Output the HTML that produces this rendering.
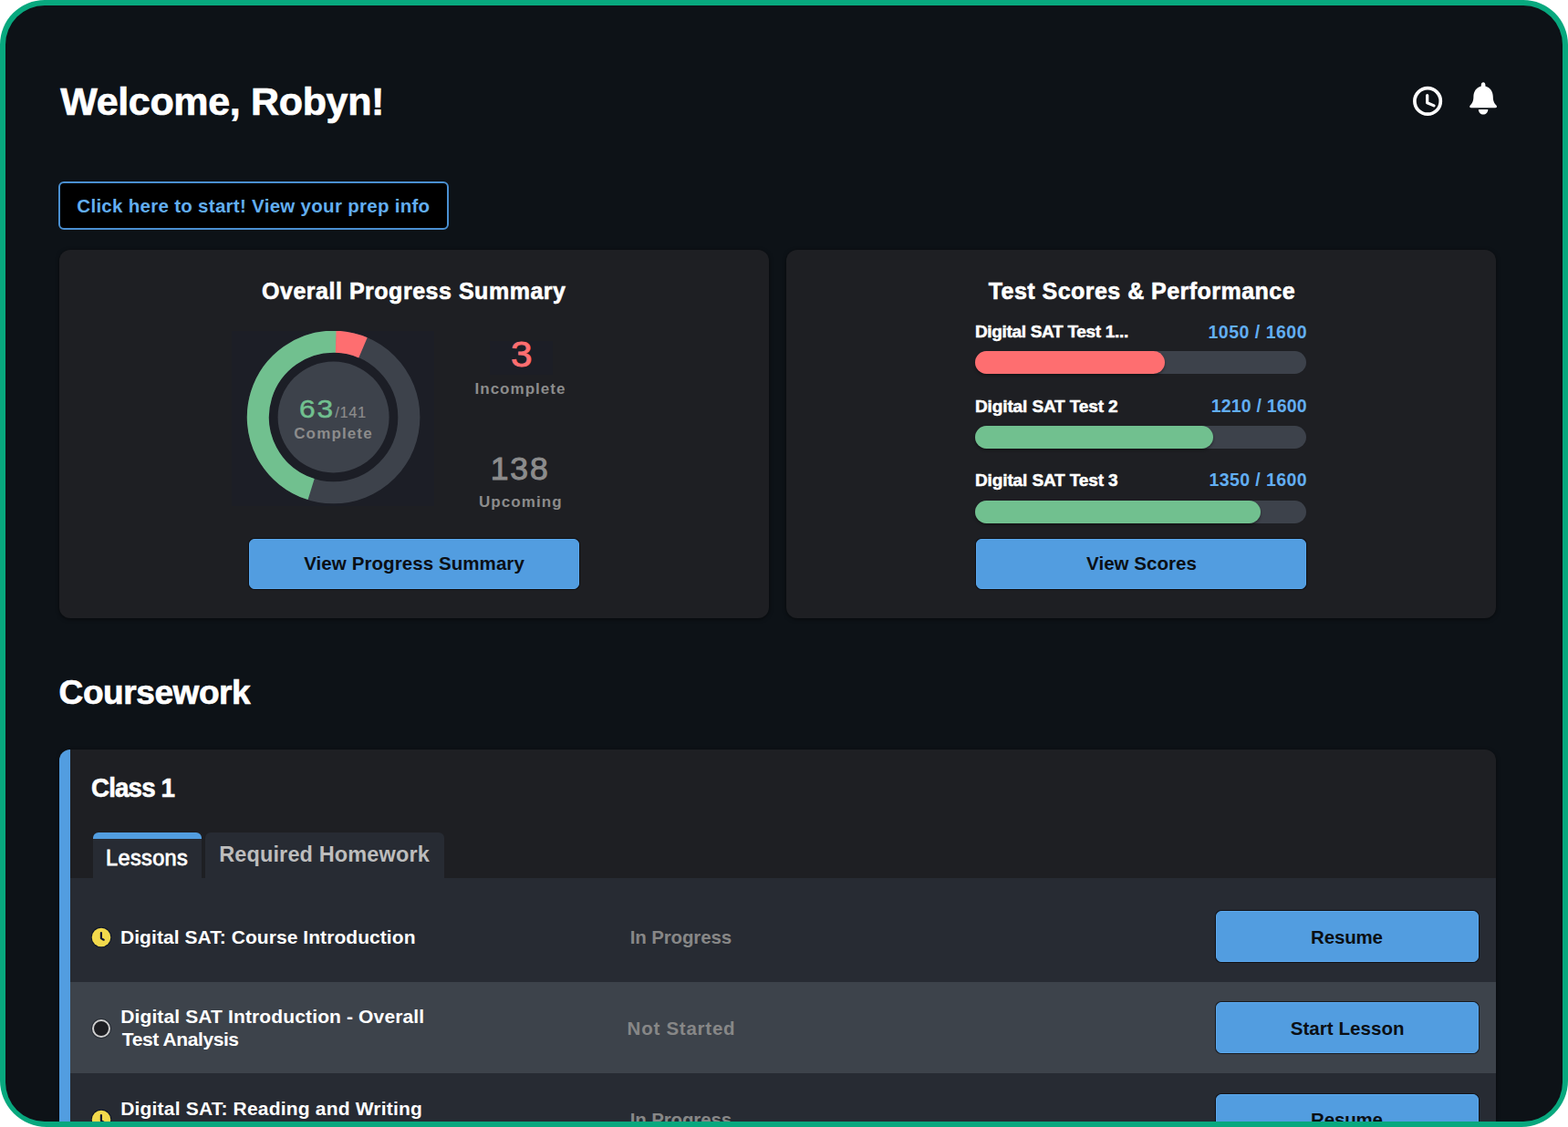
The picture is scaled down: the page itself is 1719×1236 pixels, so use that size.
<!DOCTYPE html>
<html lang="en">
<head>
<meta charset="utf-8">
<title>Welcome, Robyn!</title>
<style>
*{box-sizing:border-box}
html,body{margin:0;padding:0;width:1719px;height:1236px;overflow:hidden}
body{position:relative;background:#0d1217;font-family:"Liberation Sans", sans-serif}
#app{position:absolute;left:0;top:0;width:1719px;height:1236px;overflow:hidden}
h1,h2,h3,p,ul{margin:0;padding:0;font-weight:700}
ul{list-style:none}
button{font:inherit;padding:0;margin:0;cursor:pointer}
a{text-decoration:none}
.t{position:absolute;white-space:pre;line-height:1;font-weight:400;margin:0}
.abs{position:absolute}
#frame{position:absolute;left:0;top:0;pointer-events:none;z-index:10}
.card{position:absolute;background:#1e1f23;border-radius:12px;box-shadow:0 1px 4px rgba(0,0,0,.55)}
#prepbtn{position:absolute;border:2px solid #4a8fd0;border-radius:6px;background:#000}
.btn{position:absolute;background:#529de0;border:1px solid #5aa8ee;border-radius:6px;box-shadow:0 0 0 1px rgba(8,10,14,.7)}
.donut,.stat{position:absolute}
.donut{background:#1c1e26}
.bar{position:absolute;width:363px;height:25.6px;border-radius:13px;background:#3d424b}
.bar i{position:absolute;left:0;top:0;height:100%;border-radius:13px;box-shadow:0 2px 3px rgba(0,0,0,.35)}
.tab{position:absolute;background:#272b33;border-radius:6px 6px 0 0}
.tab.on{border-top:7px solid #529de0}
.row{position:absolute}
.todo{border-radius:50%;border:2px solid #cfcfcf;background:#1e1f23;box-shadow:0 0 0 1px rgba(20,24,32,.5)}
#welcome{left:66.2px;top:90px;font-size:43px;letter-spacing:-0.34px;color:#fff;font-weight:700;-webkit-text-stroke:0.7px #fff;}
#prep{left:18.3px;top:15px;font-size:20.5px;letter-spacing:0.29px;color:#62aef2;font-weight:700;}
#t_prog{left:222px;top:33px;font-size:25px;letter-spacing:0.52px;color:#fff;font-weight:700;-webkit-text-stroke:0.6px #fff;}
#n63{left:74.4px;top:72px;font-size:28px;letter-spacing:1.77px;color:#71c08f;-webkit-text-stroke:0.5px #71c08f;transform:scaleX(1.13);transform-origin:0 0;}
#n141{left:113.3px;top:81px;font-size:16.5px;letter-spacing:0.55px;color:#8c8c8c;-webkit-text-stroke:0.2px #8c8c8c;}
#complete{left:68.2px;top:104px;font-size:17px;letter-spacing:1.14px;color:#8c8c8c;font-weight:700;}
#n3{left:22.8px;top:-4px;font-size:38.5px;letter-spacing:0px;color:#fe6e70;-webkit-text-stroke:0.9px #fe6e70;transform:scaleX(1.1);transform-origin:0 0;}
#incomplete{left:455.5px;top:144px;font-size:17px;letter-spacing:1.02px;color:#8c8c8c;font-weight:700;}
#n138{left:472.7px;top:223px;font-size:35.5px;letter-spacing:1.88px;color:#8c8c8c;-webkit-text-stroke:1px #8c8c8c;}
#upcoming{left:460px;top:268px;font-size:17px;letter-spacing:1.08px;color:#8c8c8c;font-weight:700;}
#b_prog{left:59.2px;top:16px;font-size:20.5px;letter-spacing:0.08px;color:#0b0f14;font-weight:700;}
#t_score{left:221.7px;top:33px;font-size:25px;letter-spacing:0.47px;color:#fff;font-weight:700;-webkit-text-stroke:0.6px #fff;}
#l1{left:206.9px;top:80px;font-size:19px;letter-spacing:-0.31px;color:#fff;font-weight:700;-webkit-text-stroke:0.5px #fff;}
#s1{left:462.5px;top:81px;font-size:19.5px;letter-spacing:0.5px;color:#62aef2;font-weight:700;}
#l2{left:207px;top:162px;font-size:19px;letter-spacing:-0.12px;color:#fff;font-weight:700;-webkit-text-stroke:0.5px #fff;}
#s2{left:465.8px;top:162px;font-size:19.5px;letter-spacing:0.18px;color:#62aef2;font-weight:700;}
#l3{left:207px;top:243px;font-size:19px;letter-spacing:-0.12px;color:#fff;font-weight:700;-webkit-text-stroke:0.5px #fff;}
#s3{left:463.4px;top:243px;font-size:19.5px;letter-spacing:0.43px;color:#62aef2;font-weight:700;}
#b_score{left:120.1px;top:16px;font-size:20.5px;letter-spacing:0.03px;color:#0b0f14;font-weight:700;}
#coursework{left:64.6px;top:741px;font-size:37px;letter-spacing:-0.42px;color:#fff;font-weight:700;-webkit-text-stroke:0.7px #fff;}
#class1{left:35.2px;top:27px;font-size:29.5px;letter-spacing:-0.9px;color:#fff;font-weight:700;-webkit-text-stroke:0.6px #fff;transform:scaleX(0.94);transform-origin:0 0;}
#tab1{left:14.1px;top:10px;font-size:23.5px;letter-spacing:0.36px;color:#fff;-webkit-text-stroke:0.8px #fff;}
#tab2{left:15.2px;top:13px;font-size:23.5px;letter-spacing:0.13px;color:#bdbdbd;font-weight:700;}
#r1t{left:55px;top:54px;font-size:21px;letter-spacing:0.06px;color:#fff;font-weight:700;}
#r1s{left:613.7px;top:55px;font-size:20.5px;letter-spacing:-0.14px;color:#878787;font-weight:700;}
#r1b{left:103px;top:18px;font-size:20.5px;letter-spacing:-0.15px;color:#0b0f14;font-weight:700;}
#r2t1{left:55.2px;top:27px;font-size:21px;letter-spacing:0.13px;color:#fff;font-weight:700;}
#r2t2{left:56.8px;top:52px;font-size:21px;letter-spacing:-0.4px;color:#fff;font-weight:700;}
#r2s{left:610.6px;top:41px;font-size:20.5px;letter-spacing:0.75px;color:#878787;font-weight:700;}
#r2b{left:80.7px;top:18px;font-size:20.5px;letter-spacing:0.07px;color:#0b0f14;font-weight:700;}
#r3t1{left:55.2px;top:28px;font-size:21px;letter-spacing:0.19px;color:#fff;font-weight:700;}
#r3s{left:613.7px;top:41px;font-size:20.5px;letter-spacing:-0.14px;color:#878787;font-weight:700;}
#r3b{left:103px;top:17px;font-size:20.5px;letter-spacing:-0.15px;color:#0b0f14;font-weight:700;}
</style>
</head>
<body>
<main id="app">
<header>
<h1 id="welcome" class="t">Welcome, Robyn!</h1>
<nav aria-label="Quick actions">
<svg class="abs" style="left:1545px;top:91px" width="40" height="40" viewBox="1545 91 40 40" role="img" aria-label="History" fill="none" stroke="#fff" stroke-linecap="round" stroke-linejoin="round"><circle cx="1565.1" cy="110.9" r="14.2" stroke-width="3.7"/><path d="M1564.7 104.6V112.7L1572 115.9" stroke-width="3.2"/></svg>
<svg class="abs" style="left:1606px;top:86px" width="40" height="44" viewBox="1606 86 40 44" role="img" aria-label="Notifications"><path fill="#fff" d="M1626.1 90.3C1627.5 90.3 1628.4 91.5 1628.4 93V94.5C1633.5 95.9 1636.8 100.2 1636.8 106C1636.8 111.4 1638.5 113.4 1640.4 115.5C1641.6 116.8 1640.9 118.3 1639.3 118.3H1612.9C1611.3 118.3 1610.6 116.8 1611.8 115.5C1613.7 113.4 1615.4 111.4 1615.4 106C1615.4 100.2 1618.7 95.9 1623.8 94.5V93C1623.8 91.5 1624.7 90.3 1626.1 90.3ZM1620.9 119.9H1631.3C1631.3 123.2 1629 125.6 1626.1 125.6C1623.2 125.6 1620.9 123.2 1620.9 119.9Z"/></svg>
</nav>
</header>
<a id="prepbtn" href="#prep-info" style="left:64px;top:199px;width:428px;height:53px"><span id="prep" class="t">Click here to start! View your prep info</span></a>
<section class="card" id="progress" style="left:65px;top:274px;width:778px;height:404px">
<h2 id="t_prog" class="t">Overall Progress Summary</h2>
<div class="donut" style="left:189px;top:89px;width:222px;height:192px">
<svg class="abs" style="left:0;top:0" width="222" height="192" viewBox="254 363 222 192" role="img" aria-label="63 of 141 complete"><circle cx="365.6" cy="457.5" r="82.75" fill="none" stroke="#3d424b" stroke-width="24.1"/><circle cx="365.6" cy="457.5" r="82.75" fill="none" stroke="#71c08f" stroke-width="24.1" stroke-dasharray="237.73 519.93" transform="rotate(-252.8 365.6 457.5)"/><circle cx="365.6" cy="457.5" r="82.75" fill="none" stroke="#fe6e70" stroke-width="24.1" stroke-dasharray="30.62 519.93" transform="rotate(-88.2 365.6 457.5)"/><circle cx="365.6" cy="457.5" r="61" fill="#3d424b"/></svg>
<span id="n63" class="t">63</span><span id="n141" class="t">/141</span>
<span id="complete" class="t">Complete</span>
</div>
<div class="stat" style="left:472px;top:100px;width:69px;height:37px;background:#1c1e26"><span id="n3" class="t">3</span></div>
<span id="incomplete" class="t">Incomplete</span>
<span id="n138" class="t">138</span>
<span id="upcoming" class="t">Upcoming</span>
<button type="button" class="btn" style="left:208px;top:317px;width:362px;height:55px"><span id="b_prog" class="t">View Progress Summary</span></button>
</section>
<section class="card" id="scores" style="left:862px;top:274px;width:778px;height:404px">
<h2 id="t_score" class="t">Test Scores &amp; Performance</h2>
<div class="score"><span id="l1" class="t">Digital SAT Test 1...</span><span id="s1" class="t">1050 / 1600</span><div class="bar" style="left:207.2px;top:110.9px"><i style="width:207.5px;background:#fe6e70"></i></div></div>
<div class="score"><span id="l2" class="t">Digital SAT Test 2</span><span id="s2" class="t">1210 / 1600</span><div class="bar" style="left:207.2px;top:192.8px"><i style="width:261px;background:#71c08f"></i></div></div>
<div class="score"><span id="l3" class="t">Digital SAT Test 3</span><span id="s3" class="t">1350 / 1600</span><div class="bar" style="left:207.2px;top:274.5px"><i style="width:312.5px;background:#71c08f"></i></div></div>
<button type="button" class="btn" style="left:208px;top:317px;width:362px;height:55px"><span id="b_score" class="t">View Scores</span></button>
</section>
<h2 id="coursework" class="t">Coursework</h2>
<section class="card" id="class" style="left:65px;top:822px;width:1575px;height:414px;border-radius:12px 12px 0 0;overflow:hidden">
<div class="abs accent" style="left:0;top:0;width:12px;height:100%;background:#529de0"></div>
<h3 id="class1" class="t">Class 1</h3>
<ul class="tabs" role="tablist">
<li class="tab on" role="tab" aria-selected="true" style="left:37px;top:91px;width:119px;height:51px"><span id="tab1" class="t">Lessons</span></li>
<li class="tab" role="tab" style="left:160px;top:91px;width:262px;height:51px"><span id="tab2" class="t">Required Homework</span></li>
</ul>
<ul class="rows">
<li class="row" style="left:12px;top:141px;width:1563px;height:114px;background:#272b33"><svg class="abs ico" style="left:21.7px;top:52.6px" width="24" height="24" viewBox="-12 -12 24 24" role="img" aria-label="In progress"><circle r="11.2" fill="#0c1426"/><circle r="10.3" fill="#f2d94c"/><path d="M-0.1 -5V1.1L2.7 2.7" fill="none" stroke="#0c1430" stroke-width="2.2" stroke-linecap="round" stroke-linejoin="round"/></svg><span id="r1t" class="t">Digital SAT: Course Introduction</span><span id="r1s" class="t">In Progress</span><button type="button" class="btn" style="left:1256px;top:36px;width:288px;height:56px"><span id="r1b" class="t">Resume</span></button></li>
<li class="row" style="left:12px;top:255px;width:1563px;height:100px;background:#3d434b"><span class="abs todo" role="img" aria-label="Not started" style="left:23.5px;top:40.5px;width:20.6px;height:20.6px"></span><p class="title"><span id="r2t1" class="t">Digital SAT Introduction - Overall</span><span id="r2t2" class="t">Test Analysis</span></p><span id="r2s" class="t">Not Started</span><button type="button" class="btn" style="left:1256px;top:22px;width:288px;height:56px"><span id="r2b" class="t">Start Lesson</span></button></li>
<li class="row" style="left:12px;top:355px;width:1563px;height:100px;background:#272b33"><svg class="abs ico" style="left:21.7px;top:38.9px" width="24" height="24" viewBox="-12 -12 24 24" role="img" aria-label="In progress"><circle r="11.2" fill="#0c1426"/><circle r="10.3" fill="#f2d94c"/><path d="M-0.1 -5V1.1L2.7 2.7" fill="none" stroke="#0c1430" stroke-width="2.2" stroke-linecap="round" stroke-linejoin="round"/></svg><span id="r3t1" class="t">Digital SAT: Reading and Writing</span><span id="r3s" class="t">In Progress</span><button type="button" class="btn" style="left:1256px;top:23px;width:288px;height:56px"><span id="r3b" class="t">Resume</span></button></li>
</ul>
</section>
</main>
<svg id="frame" width="1719" height="1236" viewBox="0 0 1719 1236" aria-hidden="true"><path fill="#08a87e" fill-rule="evenodd" d="M0 0H1719V1236H0ZM49 6H1670A43 43 0 0 1 1713 49V1187A43 43 0 0 1 1670 1230H49A43 43 0 0 1 6 1187V49A43 43 0 0 1 49 6Z"/><path fill="#fff" fill-rule="evenodd" d="M0 0H1719V1236H0ZM49 0H1670A49 49 0 0 1 1719 49V1185A51 51 0 0 1 1668 1236H51A51 51 0 0 1 0 1185V49A49 49 0 0 1 49 0Z"/></svg>
</body>
</html>
